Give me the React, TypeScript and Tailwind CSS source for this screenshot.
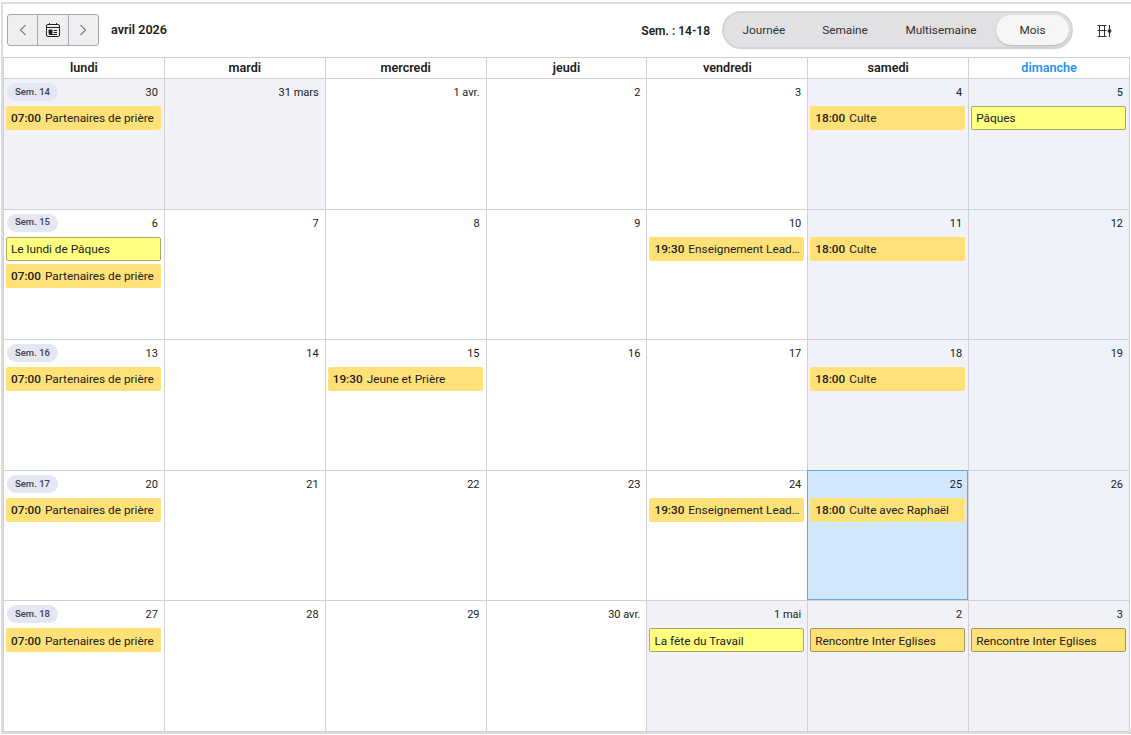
import React from "react";

type Ev = { time?: string; title: string; kind: "y" | "l" | "o" };
type Day = { label: string; bg?: string; ev?: Ev[]; week?: string; today?: boolean };

const P: Ev = { time: "07:00", title: "Partenaires de prière", kind: "o" };
const C: Ev = { time: "18:00", title: "Culte", kind: "o" };
const L: Ev = { time: "19:30", title: "Enseignement Lead...", kind: "o" };
const R: Ev = { title: "Rencontre Inter Eglises", kind: "l" };
const G = "bg-[#f1f2f8]";
const W = "bg-[#eff2fa]";

const rows: Day[][] = [
  [
    { label: "30", bg: G, ev: [P], week: "Sem. 14" },
    { label: "31 mars", bg: G },
    { label: "1 avr." },
    { label: "2" },
    { label: "3" },
    { label: "4", bg: W, ev: [C] },
    { label: "5", bg: W, ev: [{ title: "Pâques", kind: "y" }] },
  ],
  [
    { label: "6", ev: [{ title: "Le lundi de Pâques", kind: "y" }, P], week: "Sem. 15" },
    { label: "7" },
    { label: "8" },
    { label: "9" },
    { label: "10", ev: [L] },
    { label: "11", bg: W, ev: [C] },
    { label: "12", bg: W },
  ],
  [
    { label: "13", ev: [P], week: "Sem. 16" },
    { label: "14" },
    { label: "15", ev: [{ time: "19:30", title: "Jeune et Prière", kind: "o" }] },
    { label: "16" },
    { label: "17" },
    { label: "18", bg: W, ev: [C] },
    { label: "19", bg: W },
  ],
  [
    { label: "20", ev: [P], week: "Sem. 17" },
    { label: "21" },
    { label: "22" },
    { label: "23" },
    { label: "24", ev: [L] },
    { label: "25", today: true, ev: [{ time: "18:00", title: "Culte avec Raphaël", kind: "o" }] },
    { label: "26", bg: W },
  ],
  [
    { label: "27", ev: [P], week: "Sem. 18" },
    { label: "28" },
    { label: "29" },
    { label: "30 avr." },
    { label: "1 mai", bg: G, ev: [{ title: "La fête du Travail", kind: "y" }] },
    { label: "2", bg: G, ev: [R] },
    { label: "3", bg: G, ev: [R] },
  ],
];

const heads = ["lundi", "mardi", "mercredi", "jeudi", "vendredi", "samedi", "dimanche"];

function Event({ e }: { e: Ev }) {
  const cls =
    e.kind === "y"
      ? "bg-[#ffff80] border border-[#a8a860] pl-[4px]"
      : e.kind === "l"
      ? "bg-[#ffe177] border border-[#a89550] pl-[4px]"
      : "bg-[#ffe177] pl-[5px]";
  return (
    <div className={`h-6 rounded-[2px] flex items-center pr-[4px] pt-[2px] text-[11.8px] text-[#202020] overflow-hidden ${cls}`}>
      <span className="truncate block w-full">
        {e.time && <span className="font-medium mr-[4px]">{e.time}</span>}
        {e.title}
      </span>
    </div>
  );
}

function Cell({ d }: { d: Day }) {
  return (
    <div className={`flex min-w-0 border-b border-r border-[#d0d0d4] ${d.bg ?? "bg-white"}`}>
      <div
        className={`flex-1 flex flex-col min-w-0 ${
          d.today ? "bg-[#d2e8fc] border border-[#5eaaf0] -ml-px -mt-px" : ""
        }`}
      >
        <div
          className={`h-[27px] flex items-start justify-between pl-[3px] pt-[4px] shrink-0 ${
            d.today ? "pr-[5px]" : "pr-[6px]"
          }`}
        >
          {d.week ? (
            <span className="h-[18px] w-[51px] rounded-full bg-[#e4e6f4] text-[#404048] text-[9.5px] font-medium flex items-center justify-center">
              {d.week}
            </span>
          ) : (
            <span />
          )}
          <span className="text-[11px] leading-[18px] pt-[1px] text-[#202020]">{d.label}</span>
        </div>
        <div className={`flex flex-col gap-[3px] pl-[2px] ${d.today ? "pr-[2px]" : "pr-[3px]"}`}>
          {d.ev?.map((e, i) => <Event key={i} e={e} />)}
        </div>
      </div>
    </div>
  );
}

export default function App() {
  return (
    <div
      className="w-[1131px] h-[735px] bg-white overflow-hidden flex flex-col pt-[2px] pl-[1px] pb-[1px]"
      style={{ fontFamily: 'Roboto, "Noto Sans", sans-serif' }}
    >
      <div className="flex-1 min-h-0 flex flex-col border-t-2 border-l-2 border-b-2 border-[#dcdcdc]">
        <div className="h-[53px] shrink-0 flex items-center pl-[4px] pr-[18px]">
          <div className="flex h-8 w-[92px] rounded-[3px] border border-[#a8a8ac] bg-[#efeff2] text-[#303030] mt-[-2px]">
            <button className="flex-1 flex items-center justify-center border-r border-[#a8a8ac]">
              <svg width="12" height="14" viewBox="0 0 12 14" fill="none" stroke="#333" strokeWidth="1">
                <path d="M8.5 2 L3.5 7 L8.5 12" />
              </svg>
            </button>
            <button className="flex-1 flex items-center justify-center border-r border-[#a8a8ac]">
              <svg width="16" height="16" viewBox="0 0 16 16" fill="none" stroke="#222" strokeWidth="1">
                <rect x="1.5" y="2.5" width="13" height="12" rx="1.5" />
                <path d="M1.5 5.5 H14.5 M4.5 1 V3 M11.5 1 V3" />
                <path d="M4 8 H7 V11.5 H4 Z" fill="#222" />
                <path d="M8.5 8.5 H12 M8.5 10.5 H12 M4 12.5 H12" />
              </svg>
            </button>
            <button className="flex-1 flex items-center justify-center">
              <svg width="12" height="14" viewBox="0 0 12 14" fill="none" stroke="#333" strokeWidth="1">
                <path d="M3.5 2 L8.5 7 L3.5 12" />
              </svg>
            </button>
          </div>
          <div className="ml-3 text-[12.6px] font-semibold text-[#202020]">avril 2026</div>
          <div className="flex-1" />
          <div className="text-[12px] font-semibold text-[#202020] mr-3">Sem. : 14-18</div>
          <div className="h-[38px] w-[351px] rounded-full bg-[#e1e1e4] border-2 border-[#d4d4d8] flex items-center text-[11.8px] text-[#303030] mt-[-2px] pr-[1px]">
            <span className="w-[80px] text-center pt-[2px]">Journée</span>
            <span className="w-[82px] text-center pt-[2px]">Semaine</span>
            <span className="w-[110px] text-center pt-[2px]">Multisemaine</span>
            <span className="w-[73px] h-[30px] rounded-full bg-[#f6f6f7] shadow-[0_1px_2px_rgba(0,0,0,0.2)] flex items-center justify-center pt-[2px]">Mois</span>
          </div>
          <div className="ml-[24px] w-[16px] mt-[-2px]">
            <svg width="16" height="16" viewBox="0 0 16 16" fill="none" stroke="#333" strokeWidth="1">
              <path d="M0.5 3.5 H9.5 M2.5 3.5 V8.5 M7.5 3.5 V8.5 M0.5 8.5 H9.5 M2.5 8.5 V14.5 M7.5 8.5 V14.5 M0.5 14.5 H9.5 M12.5 3 V15" />
              <circle cx="12.5" cy="9" r="1.5" fill="#333" />
            </svg>
          </div>
        </div>
        <div className="flex-1 min-h-0 flex flex-col mr-[1px] border-t border-l border-[#d0d0d4]">
          <div className="h-[21px] shrink-0 grid grid-cols-7">
            {heads.map((h, i) => (
              <div
                key={h}
                className={`flex items-center justify-center border-r border-b border-[#d0d0d4] text-[12.6px] font-semibold ${
                  i === 6 ? "text-[#2196f3]" : "text-[#202020]"
                }`}
              >
                {h}
              </div>
            ))}
          </div>
          <div className="flex-1 min-h-0 grid grid-cols-7 grid-rows-5">
            {rows.flat().map((d, i) => (
              <Cell key={i} d={d} />
            ))}
          </div>
        </div>
      </div>
    </div>
  );
}
